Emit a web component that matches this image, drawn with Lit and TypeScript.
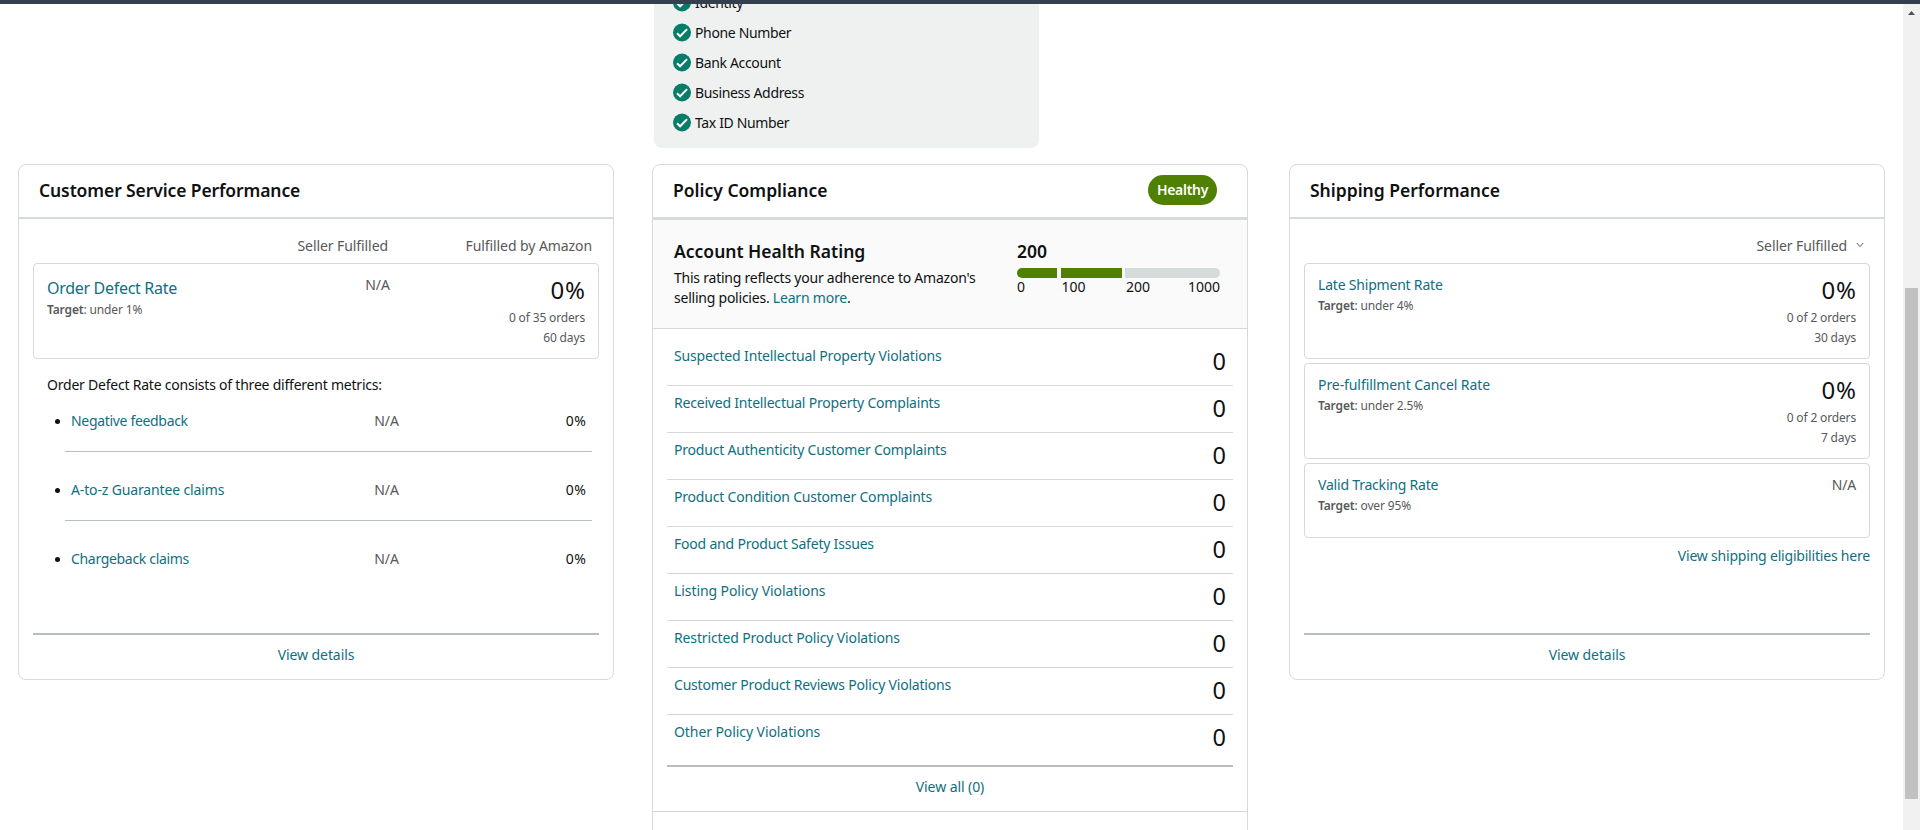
import { LitElement, html, css } from "lit";
import { customElement } from "lit/decorators.js";

@customElement("app-root")
export class AppRoot extends LitElement {
  static styles = css`
    :host { display: block; height: 830px; overflow: hidden; background: #fff; color: #0f1111;
      font: 14px/20px "Noto Sans", "Open Sans", sans-serif; }
    * { box-sizing: border-box; }
    .topbar { height: 4px; background: #343f50; }
    .page { display: flex; height: 826px; }
    .content { flex: 1; min-width: 0; overflow: hidden; }
    .verify { width: 385px; height: 144px; margin-left: 654px; padding-left: 19px; background: #eff1f1;
      border-radius: 0 0 8px 8px; overflow: hidden; }
    .vlist { margin-top: -16px; letter-spacing: -0.35px; }
    .vitem { display: flex; height: 30px; align-items: center; gap: 3px; }
    .vitem svg { width: 19px; height: 19px; margin-top: -2px; }
    .cards { display: grid; grid-template-columns: 596px 596px 596px; column-gap: 39px; margin: 16px 0 0 18px; align-items: start; }
    .card { border: 1px solid #d5dbdb; border-radius: 8px; height: 516px; display: flex; flex-direction: column; }
    .card.mid { height: 690px; margin-left: -1px; margin-right: 1px; }
    .card.last { margin-left: 1px; margin-right: -1px; }
    .head { height: 54px; padding: 0 30px 2px 20px; display: flex; align-items: center; justify-content: space-between;
      border-bottom: 2px solid #d5dbdb; flex: none; }
    .mid .head { height: 55px; border-bottom-width: 3px; }
    .h { font-weight: 600; font-size: 17.5px; line-height: 24px; }
    .head .long { letter-spacing: -0.11px; }
    .badge { width: 69px; height: 30px; border-radius: 15px; background: #508000; color: #fff; font-weight: 600;
      text-align: center; line-height: 30px; letter-spacing: -0.3px; }
    .body { padding: 0 14px; display: flex; flex-direction: column; flex: 1; }
    .cols { height: 44px; padding: 17px 7px 0 0; display: flex; justify-content: flex-end; color: #565959; letter-spacing: -0.08px; }
    .cols .fba { width: 204px; text-align: right; }
    .cols.single { padding-right: 6px; gap: 9px; }
    .cols svg { width: 8px; height: 8px; margin-top: 5px; }
    .box { border: 1px solid #d5d9d9; border-radius: 4px; height: 96px; padding: 11px 13px 0 13px; display: flex;
      justify-content: space-between; flex: none; }
    .box + .box { margin-top: 4px; }
    .box.short { height: 75px; }
    .link { color: #0f6f80; letter-spacing: -0.2px; }
    .s0 { letter-spacing: -0.08px; }
    .s1 { letter-spacing: -0.14px; }
    .s3 { letter-spacing: -0.32px; }
    .big { font-size: 16px; line-height: 24px; letter-spacing: -0.3px; padding-top: 1px; }
    .left { width: 240px; }
    .target { font-size: 12px; line-height: 22px; color: #565959; letter-spacing: -0.15px; }
    .big + .target { line-height: 20px; }
    .target b { font-weight: 600; }
    .na { color: #565959; }
    .odr .na { width: 103px; text-align: right; }
    .right { flex: 1; text-align: right; font-size: 12px; color: #565959; letter-spacing: -0.15px; }
    .right .na { font-size: 14px; }
    .num { font-size: 23.5px; line-height: 30px; height: 33px; color: #0f1111; }
    .rate { font-size: 24px; letter-spacing: 0.9px; margin-right: -0.9px; }
    .intro { margin: 16px 14px 0; letter-spacing: -0.22px; }
    .metrics { margin: 6px 7px 0 32px; }
    .metric { height: 69px; padding: 10px 6px 0 6px; display: grid; grid-template-columns: 250px 78px 1fr; position: relative; }
    .metric:not(:last-child)::after { content: ""; position: absolute; left: 0; right: 0; bottom: 18px; border-top: 1px solid #b8bfbf; }
    .metric::before { content: ""; position: absolute; left: -10px; top: 18px; width: 5px; height: 5px; border-radius: 50%; background: #0f1111; }
    .metric .na, .metric .pct { text-align: right; }
    .pct { letter-spacing: 0.5px; margin-right: -0.5px; }
    .foot { margin-top: auto; border-top: 2px solid #b8bfbf; height: 46px; padding-top: 10px; text-align: center; }
    .rating { height: 109px; background: #fafafa; border-bottom: 1px solid #d5d9d9; padding: 19px 27px 0 21px; display: flex;
      justify-content: space-between; flex: none; }
    .desc { margin-top: 5px; white-space: nowrap; letter-spacing: -0.23px; }
    .meter { width: 203px; }
    .bar { display: flex; height: 10px; margin-top: 5px; gap: 3px; border-radius: 5px; overflow: hidden; }
    .seg1 { width: 40px; background: #508000; margin-right: 1px; }
    .seg2 { width: 61px; background: #508000; }
    .seg3 { flex: 1; background: #d5dbdb; }
    .scale { display: grid; grid-template-columns: 44.5px 64.5px 30px 1fr; margin-top: -1px; }
    .scale :last-child { text-align: right; }
    .rows { margin: 10px 14px 0; }
    .row { height: 47px; border-bottom: 1px solid #d5d9d9; padding: 7px 7px 0; display: flex; justify-content: space-between; }
    .row:last-child { border-bottom: 2px solid #b8bfbf; height: 52px; }
    .all { height: 45px; border-bottom: 1px solid #d5d9d9; text-align: center; padding-top: 10px; }
    .all .link, .foot .link { letter-spacing: -0.08px; }
    .elig { text-align: right; margin-top: 8px; }
    .scroll { width: 17px; background: #f1f1f1; padding: 7px 2px 0; }
    .scroll svg { display: block; width: 7px; height: 4px; margin-left: 3px; }
    .thumb { width: 13px; height: 511px; margin-top: 273px; background: #c1c1c1; }
  `;

  private violations = [
    ["Suspected Intellectual Property Violations", "s1"], ["Received Intellectual Property Complaints", ""],
    ["Product Authenticity Customer Complaints", ""], ["Product Condition Customer Complaints", ""],
    ["Food and Product Safety Issues", ""], ["Listing Policy Violations", "s0"],
    ["Restricted Product Policy Violations", "s1"], ["Customer Product Reviews Policy Violations", ""],
    ["Other Policy Violations", "s0"],
  ];

  private metrics = [["Negative feedback", "s3"], ["A-to-z Guarantee claims", "s1"], ["Chargeback claims", "s3"]];

  private shipping = [
    { name: "Late Shipment Rate", cls: "", target: "under 4%", orders: "0 of 2 orders", days: "30 days" },
    { name: "Pre-fulfillment Cancel Rate", cls: "s0", target: "under 2.5%", orders: "0 of 2 orders", days: "7 days" },
  ];

  render() {
    return html`
      <div class="topbar"></div>
      <div class="page">
        <div class="content">
          <div class="verify"><div class="vlist">
            ${["Identity", "Phone Number", "Bank Account", "Business Address", "Tax ID Number"].map((t) => html`
              <div class="vitem"><svg viewBox="0 0 19 19"><circle cx="9" cy="9.5" r="9" fill="#067d68"/>
                <path d="M4 10.2l3.1 3.1 7-7.2" fill="none" stroke="#fff" stroke-width="2"/></svg><span>${t}</span></div>`)}
          </div></div>
          <div class="cards">
            <section class="card">
              <div class="head"><span class="h long">Customer Service Performance</span></div>
              <div class="body">
                <div class="cols"><span>Seller Fulfilled</span><span class="fba">Fulfilled by Amazon</span></div>
                <div class="box odr">
                  <div class="left"><div class="link big">Order Defect Rate</div><div class="target"><b>Target</b>: under 1%</div></div>
                  <div class="na">N/A</div>
                  <div class="right"><div class="num rate">0%</div><div>0 of 35 orders</div><div>60 days</div></div>
                </div>
                <div class="intro"><span>Order Defect Rate consists of three different metrics:</span></div>
                <div class="metrics">
                  ${this.metrics.map(([t, c]) => html`
                    <div class="metric"><span class="link ${c}">${t}</span><span class="na">N/A</span><span class="pct">0%</span></div>`)}
                </div>
                <div class="foot"><span class="link">View details</span></div>
              </div>
            </section>
            <section class="card mid">
              <div class="head"><span class="h">Policy Compliance</span><span class="badge">Healthy</span></div>
              <div class="rating">
                <div><div class="h">Account Health Rating</div>
                  <div class="desc">This rating reflects your adherence to Amazon's<br>selling policies. <span class="link">Learn more</span>.</div></div>
                <div class="meter"><div class="h">200</div>
                  <div class="bar"><div class="seg1"></div><div class="seg2"></div><div class="seg3"></div></div>
                  <div class="scale"><span>0</span><span>100</span><span>200</span><span>1000</span></div></div>
              </div>
              <div class="rows">${this.violations.map(([t, c]) => html`
                <div class="row"><span class="link ${c}">${t}</span><span class="num">0</span></div>`)}</div>
              <div class="all"><span class="link">View all (0)</span></div>
            </section>
            <section class="card last">
              <div class="head"><span class="h">Shipping Performance</span></div>
              <div class="body">
                <div class="cols single"><span>Seller Fulfilled</span>
                  <svg viewBox="0 0 8 8"><path d="M.8 2L4 5.6 7.2 2" fill="none" stroke="#565959"/></svg></div>
                ${this.shipping.map((s) => html`
                  <div class="box"><div class="left"><div class="link ${s.cls}">${s.name}</div><div class="target"><b>Target</b>: ${s.target}</div></div>
                    <div class="right"><div class="num rate">0%</div><div>${s.orders}</div><div>${s.days}</div></div></div>`)}
                <div class="box short"><div class="left"><div class="link">Valid Tracking Rate</div><div class="target"><b>Target</b>: over 95%</div></div>
                  <div class="right"><div class="na">N/A</div></div></div>
                <div class="elig"><span class="link">View shipping eligibilities here</span></div>
                <div class="foot"><span class="link">View details</span></div>
              </div>
            </section>
          </div>
        </div>
        <div class="scroll"><svg viewBox="0 0 7 4"><path d="M0 4h7L3.5 0z" fill="#505050"/></svg><div class="thumb"></div></div>
      </div>`;
  }
}
